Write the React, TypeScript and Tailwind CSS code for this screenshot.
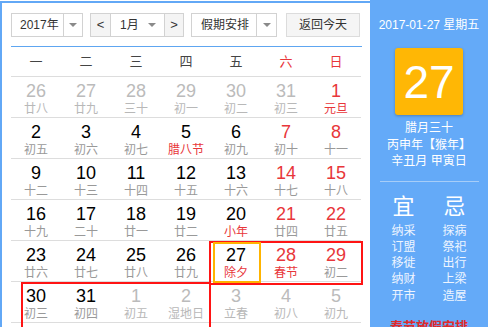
const font = "font-['Liberation_Sans','Noto_Sans_CJK_SC',sans-serif]";

// [day, lunar, kind] kind: 0 normal, 1 other month, 2 red day, 3 red day + red lunar, 4 red lunar
const weeks: [string, string, number][][] = [
  [["26", "廿八", 1], ["27", "廿九", 1], ["28", "三十", 1], ["29", "初一", 1], ["30", "初二", 1], ["31", "初三", 1], ["1", "元旦", 3]],
  [["2", "初五", 0], ["3", "初六", 0], ["4", "初七", 0], ["5", "腊八节", 4], ["6", "初九", 0], ["7", "初十", 2], ["8", "十一", 2]],
  [["9", "十二", 0], ["10", "十三", 0], ["11", "十四", 0], ["12", "十五", 0], ["13", "十六", 0], ["14", "十七", 2], ["15", "十八", 2]],
  [["16", "十九", 0], ["17", "二十", 0], ["18", "廿一", 0], ["19", "廿二", 0], ["20", "小年", 4], ["21", "廿四", 2], ["22", "廿五", 2]],
  [["23", "廿六", 0], ["24", "廿七", 0], ["25", "廿八", 0], ["26", "廿九", 0], ["27", "除夕", 4], ["28", "春节", 3], ["29", "初二", 2]],
  [["30", "初三", 0], ["31", "初四", 0], ["1", "初五", 1], ["2", "湿地日", 1], ["3", "立春", 1], ["4", "初八", 1], ["5", "初九", 1]],
];

const dayColor = ["text-black", "text-[#bbbbbb]", "text-[#e8363a]", "text-[#e8363a]", "text-black"];
const lunarColor = ["text-[#999999]", "text-[#b8b8b8]", "text-[#999999]", "text-[#e8363a]", "text-[#e8363a]"];

const weekdays = ["一", "二", "三", "四", "五", "六", "日"];

const yi = ["纳采", "订盟", "移徙", "纳财", "开市"];
const ji = ["探病", "祭祀", "出行", "上梁", "造屋"];

function Caret() {
  return (
    <span className="h-0 w-0 border-x-[4px] border-t-[4px] border-x-transparent border-t-[#8a8a8a]" />
  );
}

export default function App() {
  return (
    <div className={`relative flex h-[327px] w-[488px] overflow-hidden bg-white ${font}`}>
      {/* calendar */}
      <div className="mt-px w-[370px] border-l-2 border-t-2 border-[#62a8f6] pl-[9px]">
        <div className="flex items-center pt-[10px] text-[12px] text-[#333]">
          <div className="flex h-[24px] w-[72px] border border-[#d2d2d2]">
            <span className="flex w-[51px] items-center pl-[8px]">2017年</span>
            <span className="flex flex-1 items-center justify-center border-l border-[#d2d2d2]">
              <Caret />
            </span>
          </div>
          <div className="ml-[7px] flex h-[24px] w-[94px] border border-[#d2d2d2]">
            <span className="flex w-[20px] items-center justify-center border-r border-[#d2d2d2] bg-[#f4f4f4] text-[13px]">&lt;</span>
            <span className="flex flex-1 items-center justify-between pl-[9px] pr-[8px]">
              1月
              <Caret />
            </span>
            <span className="flex w-[19px] items-center justify-center border-l border-[#d2d2d2] bg-[#f4f4f4] text-[13px]">&gt;</span>
          </div>
          <div className="ml-[7px] flex h-[24px] w-[86px] border border-[#d2d2d2]">
            <span className="flex w-[64px] items-center pl-[9px]">假期安排</span>
            <span className="flex flex-1 items-center justify-center border-l border-[#d2d2d2]">
              <Caret />
            </span>
          </div>
          <div className="ml-[9px] flex h-[24px] w-[74px] items-center justify-center border border-[#dcdcdc] bg-[#f5f5f5]">
            返回今天
          </div>
        </div>

        <div className="mt-[9px] h-px w-[351px] bg-[#5ea6f1]" />

        <div className="w-[350px]">
          <div className="grid h-[30px] grid-cols-7 border-b border-[#dddddd] text-[13px]">
            {weekdays.map((w, i) => (
              <div
                key={w}
                className={`flex items-center justify-center ${i > 4 ? "text-[#e8363a]" : "text-[#444]"}`}
              >
                {w}
              </div>
            ))}
          </div>
          {weeks.map((week, r) => (
            <div key={r} className="grid h-[41px] grid-cols-7 border-b border-[#dddddd]">
              {week.map(([d, l, k], c) => (
                <div key={c} className="flex flex-col items-center pt-[4px]">
                  <span className={`text-[18px] leading-[21px] ${dayColor[k]}`}>{d}</span>
                  <span className={`whitespace-nowrap text-[12px] leading-[15px] ${lunarColor[k]}`}>{l}</span>
                </div>
              ))}
            </div>
          ))}
        </div>
      </div>

      {/* side panel */}
      <div className="flex w-[118px] flex-col items-center bg-[#64aaf8] pt-[17px] text-white">
        <div className="shrink-0 text-[12px] leading-[16px]">2017-01-27 星期五</div>
        <div className="mt-[15px] flex h-[67px] w-[68px] shrink-0 items-center justify-center rounded-[3px] bg-[#ffb705] text-[46px] leading-none shadow-[0_1px_3px_rgba(0,0,0,0.25)]">
          27
        </div>
        <div className="mt-[5px] flex shrink-0 flex-col items-center text-[12px] leading-[16.5px]">
          <span>腊月三十</span>
          <span>丙申年【猴年】</span>
          <span>辛丑月 甲寅日</span>
        </div>
        <div className="mt-[11px] h-px w-[99px] shrink-0 bg-[#a6cdf8]" />
        <div className="mt-[12px] grid w-full shrink-0 grid-cols-[51px_51px] pl-[8px] text-center">
          <span className="text-[22px] leading-[26px]">宜</span>
          <span className="text-[22px] leading-[26px]">忌</span>
          <div className="mt-[3px] flex flex-col text-[12px] leading-[16.3px] text-[#eef5ff]">
            {yi.map((t) => (
              <span key={t}>{t}</span>
            ))}
          </div>
          <div className="mt-[3px] flex flex-col text-[12px] leading-[16.3px] text-[#eef5ff]">
            {ji.map((t) => (
              <span key={t}>{t}</span>
            ))}
          </div>
        </div>
        <div className="mt-[15px] shrink-0 whitespace-nowrap text-[13px] leading-[16px] font-bold text-[#e02a2a]">春节放假安排</div>
      </div>

      {/* highlight boxes */}
      <div className="absolute left-[209px] top-[241px] h-[44px] w-[154px] border-2 border-[#ff1414]" />
      <div className="absolute left-[21px] top-[282px] h-[60px] w-[190px] border-2 border-[#ff1414]" />
      <div className="absolute left-[213px] top-[242px] h-[41px] w-[48px] border-2 border-[#ffb400]" />
    </div>
  );
}
